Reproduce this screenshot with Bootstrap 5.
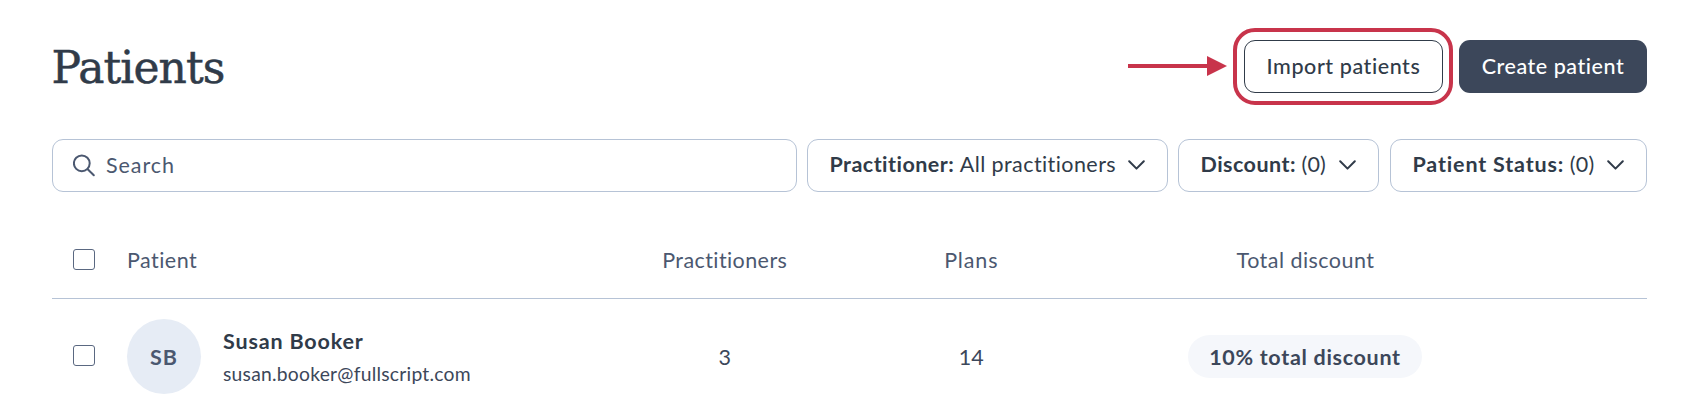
<!DOCTYPE html>
<html lang="en">
<head>
<meta charset="utf-8">
<meta name="viewport" content="width=device-width, initial-scale=1">
<title>Patients</title>
<link href="https://cdn.jsdelivr.net/npm/bootstrap@5.3.0/dist/css/bootstrap.min.css" rel="stylesheet">
<style>
:root{--ink:#303b49;--slate:#3c475a;--muted:#4b5870;--edge:#b6c3d6;--red:#c8344b}
body{font-family:Lato,"Open Sans",sans-serif;font-size:21.5px;line-height:28px;color:var(--slate);background:#fff;overflow:hidden;font-variant-ligatures:none}
.page{padding:40px 53px 0 52px}
.page-title{font-family:"DejaVu Serif",serif;font-size:44px;font-weight:400;line-height:53px;letter-spacing:-.92px;color:var(--ink);padding-top:1px;margin:0 0 -1px -.5px;-webkit-text-stroke:.5px var(--ink)}
.top-bar{height:53px}
.action{height:53px;border-radius:11px;font-size:21.5px;font-weight:500;line-height:28px;white-space:nowrap;padding:0 0 1px}
.action-import{width:199px;border:1px solid var(--ink);color:var(--ink);background:#fff;letter-spacing:.57px}
.action-create{width:188px;background:var(--slate);color:#fff;border:0;letter-spacing:.53px}
.halo{left:-11px;top:-12px;width:220px;height:77px;border:4px solid var(--red);border-radius:22px;pointer-events:none}
.arrow{left:-116px;top:16px}
.filters{margin-top:46px;gap:10px}
.field{height:53px;border:1px solid var(--edge);border-radius:11px;color:var(--ink);white-space:nowrap;background:#fff}
.field svg{flex:none}
.search-box{padding:0 0 1px 20px;color:var(--muted)}
.search-label{margin-left:10px;letter-spacing:.95px}
.filter{padding:0 22px 3px 21.5px}
.filter-practitioner{width:361px}
.filter-discount{width:201px;margin-right:1px}
.filter-status{width:257px}
.ls-1{letter-spacing:.24px}
.ls-2{letter-spacing:.42px}
.ls-3{letter-spacing:.46px}
.ls-4{letter-spacing:.7px}
.ls-5{letter-spacing:.84px}
.grid-row{display:grid;grid-template-columns:75px 474px 247.5px 245.5px 423px;align-items:center}
.head-row{height:107px;padding-top:30px;border-bottom:1px solid var(--edge);color:var(--muted)}
.body-row{height:115px}
.tick{width:22px;height:21px;margin:0 0 0 21px;border:1px solid #5a6881;border-radius:3px!important;background:#fff;display:block}
.head-row .tick,.body-row .tick{margin-bottom:2px}
.avatar{width:74px;height:75px;background:#e6ecf5;color:var(--muted);font-weight:700;letter-spacing:1px}
.person{margin-left:22px;padding-top:2px}
.person-name{font-weight:700;color:var(--ink);line-height:28px}
.person-mail{font-size:19.3px;line-height:28px;margin-top:5px}
.pill{width:234px;height:43px;background:#f5f7fb;font-weight:700;margin-right:1px}
</style>
</head>
<body>
<main class="page">
  <header class="top-bar d-flex justify-content-between align-items-start">
    <h1 class="page-title">Patients</h1>
    <div class="d-flex">
      <div class="position-relative me-3">
        <svg class="arrow position-absolute" width="100" height="20" viewBox="0 0 100 20"><path d="M0 10H80" stroke="#c8344b" stroke-width="4"/><path d="M79 0L99 10L79 20Z" fill="#c8344b"/></svg>
        <button class="btn action action-import" type="button">Import patients</button>
        <div class="halo position-absolute"></div>
      </div>
      <button class="btn action action-create" type="button">Create patient</button>
    </div>
  </header>

  <div class="filters d-flex">
    <div class="field search-box d-flex align-items-center flex-grow-1">
      <svg width="23" height="23" viewBox="0 0 23 23" fill="none" stroke="#4b5870" stroke-width="2" stroke-linecap="round"><circle cx="8.8" cy="9.3" r="7.9"/><path d="M14.7 15.2L20.8 21.3"/></svg>
      <span class="search-label">Search</span>
    </div>
    <button class="field filter filter-practitioner d-flex align-items-center justify-content-between" type="button">
      <span><b class="ls-3">Practitioner:</b> <span class="ls-2">All practitioners</span></span>
      <svg width="17" height="11" viewBox="0 0 17 11" fill="none" stroke="#303b49" stroke-width="2" stroke-linecap="round" stroke-linejoin="round"><path d="M1.2 2.2L8.5 9.6L15.8 2.2"/></svg>
    </button>
    <button class="field filter filter-discount d-flex align-items-center justify-content-between" type="button">
      <span><b class="ls-3">Discount:</b> <span class="ls-1">(0)</span></span>
      <svg width="17" height="11" viewBox="0 0 17 11" fill="none" stroke="#303b49" stroke-width="2" stroke-linecap="round" stroke-linejoin="round"><path d="M1.2 2.2L8.5 9.6L15.8 2.2"/></svg>
    </button>
    <button class="field filter filter-status d-flex align-items-center justify-content-between" type="button">
      <span><b class="ls-5">Patient Status:</b> <span class="ls-1">(0)</span></span>
      <svg width="17" height="11" viewBox="0 0 17 11" fill="none" stroke="#303b49" stroke-width="2" stroke-linecap="round" stroke-linejoin="round"><path d="M1.2 2.2L8.5 9.6L15.8 2.2"/></svg>
    </button>
  </div>

  <section>
    <div class="grid-row head-row">
      <input class="form-check-input tick" type="checkbox" aria-label="Select all">
      <div class="ls-3">Patient</div>
      <div class="text-center ls-2">Practitioners</div>
      <div class="text-center ls-5">Plans</div>
      <div class="text-center ls-3">Total discount</div>
    </div>
    <div class="grid-row body-row">
      <input class="form-check-input tick" type="checkbox" aria-label="Select Susan Booker">
      <div class="d-flex align-items-center">
        <div class="avatar rounded-circle d-flex align-items-center justify-content-center">SB</div>
        <div class="person">
          <div class="person-name ls-5">Susan Booker</div>
          <div class="person-mail ls-1">susan.booker@fullscript.com</div>
        </div>
      </div>
      <div class="text-center">3</div>
      <div class="text-center">14</div>
      <div class="d-flex justify-content-center"><span class="pill rounded-pill d-flex align-items-center justify-content-center ls-4">10% total discount</span></div>
    </div>
  </section>
</main>
</body>
</html>
